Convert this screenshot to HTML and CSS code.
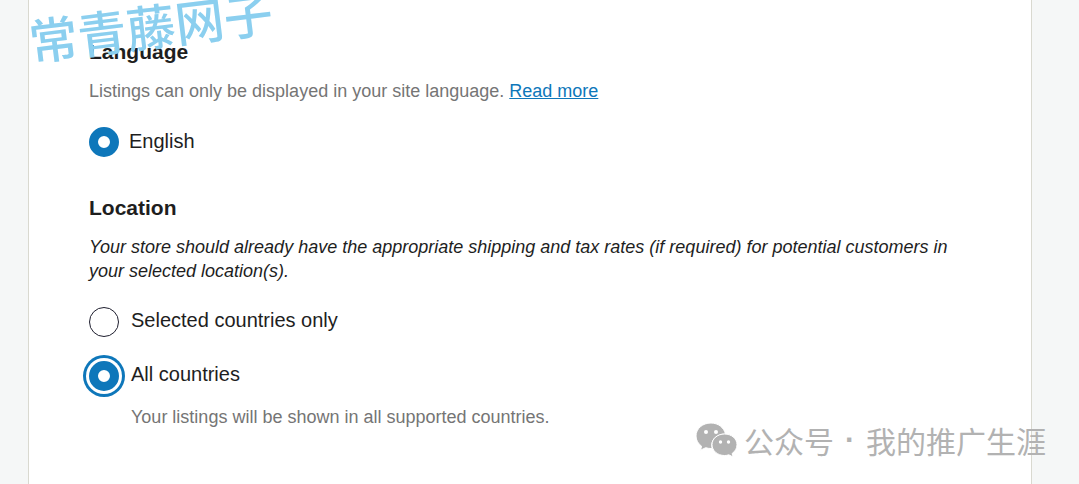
FILE: index.html
```html
<!DOCTYPE html>
<html lang="en">
<head>
    <meta charset="UTF-8">
    <meta name="viewport" content="width=device-width, initial-scale=1.0">
    <title>Listing settings</title>
    <link rel="stylesheet" href="styles.css">
</head>
<body>
    <main class="card">
        <!-- Language -->
        <section class="section">
            <h2>Language</h2>
            <p class="muted">Listings can only be displayed in your site language. <a href="#">Read more</a></p>
            <div class="option option-single">
                <input type="radio" name="language" id="english" checked>
                <label for="english">English</label>
            </div>
        </section>

        <!-- Location -->
        <section class="section">
            <h2>Location</h2>
            <p class="note">Your store should already have the appropriate shipping and tax rates (if required) for potential customers in your selected location(s).</p>
            <div class="option">
                <input type="radio" name="location" id="selected">
                <label for="selected">Selected countries only</label>
            </div>
            <div class="option">
                <input type="radio" name="location" id="all" class="focused" checked>
                <label for="all">All countries</label>
            </div>
            <p class="muted help">Your listings will be shown in all supported countries.</p>
        </section>
    </main>

    <!-- Watermarks -->
    <div class="stamp" lang="zh">常青藤网子</div>
    <div class="account" lang="zh">
        <svg class="wechat" viewBox="0 0 42 34" aria-hidden="true">
            <path d="M15 0C6.500 0 0 5.700 0 13c0 4.200 2.200 7.800 5.600 10.200L4.500 27.200l5.200-2.500c1.700.5 3.500.8 5.400.8h1C14 17 20.500 10.800 29.500 11 28 4.600 22.200 0 15 0z"/>
            <path d="M28.500 11C21.500 11 16 15.700 16 21.700S21.500 32.500 28.500 32.500c1.500 0 3-.2 4.300-.7l4.400 2.200-1.100-3.500c2.900-2 4.900-5 4.900-8.800C41 15.700 35.500 11 28.500 11z"/>
            <g class="eyes">
                <circle cx="10" cy="9" r="2"/>
                <circle cx="20" cy="9" r="2"/>
                <circle cx="24.500" cy="19" r="1.700"/>
                <circle cx="32.500" cy="19" r="1.700"/>
            </g>
        </svg>
        <span>公众号</span>
        <span class="dot">·</span>
        <span>我的推广生涯</span>
    </div>
</body>
</html>
```
FILE: styles.css
```css
* {
    box-sizing: border-box;
}
body {
    margin: 0;
    position: relative;
    overflow: hidden;
    background: #f5f7f7;
    color: #1e1e1e;
    font-family: "Liberation Sans", Arial, sans-serif;
}
.card {
    min-height: 100vh;
    margin: 0 47px 0 28px;
    padding: 40px 60px 0;
    background: #fff;
    border: solid #d9d9d0;
    border-width: 0 1px;
}
.section {
    margin-bottom: 39px;
}
h2 {
    margin: 0 0 15px;
    font-size: 21px;
    line-height: 24px;
}
p {
    margin: 0 0 24px;
    font-size: 18px;
    line-height: 24px;
}
.muted {
    color: #757575;
}
.note {
    font-style: italic;
}
a {
    color: #0e77ba;
}
.option {
    display: flex;
    gap: 12px;
    margin-bottom: 24px;
    font-size: 20px;
    line-height: 27px;
}
.option-single {
    gap: 10px;
    line-height: 28px;
}
input[type="radio"] {
    appearance: none;
    flex: none;
    width: 30px;
    height: 30px;
    margin: 0;
    border: 1px solid #1e1e2e;
    border-radius: 50%;
    background: #fff;
}
input[type="radio"]:checked {
    border: 9px solid #0e77ba;
}
input[type="radio"].focused {
    box-shadow: 0 0 0 3px #fff, 0 0 0 6px #0e77ba;
}
.help {
    margin: -10px 0 0 42px;
}
.stamp {
    position: absolute;
    top: -10px;
    left: 28px;
    color: #8bcfef;
    font-family: "Noto Sans CJK SC", sans-serif;
    font-size: 49px;
    font-weight: 500;
    line-height: 70px;
    transform: rotate(-7deg);
}
.account {
    position: absolute;
    top: 418px;
    right: 33px;
    display: flex;
    align-items: center;
    color: #b2b2b2;
    font-family: "Noto Sans CJK SC", sans-serif;
    font-size: 30px;
    font-weight: 400;
    line-height: 44px;
}
.dot {
    width: 32px;
    font-family: "Liberation Sans", Arial, sans-serif;
    font-weight: 700;
    text-align: center;
}
.wechat {
    width: 42px;
    height: 34px;
    margin-right: 6px;
    fill: #b2b2b2;
}
.wechat path {
    stroke: #fff;
    stroke-width: 1;
}
.wechat .eyes {
    fill: #fff;
}
```
